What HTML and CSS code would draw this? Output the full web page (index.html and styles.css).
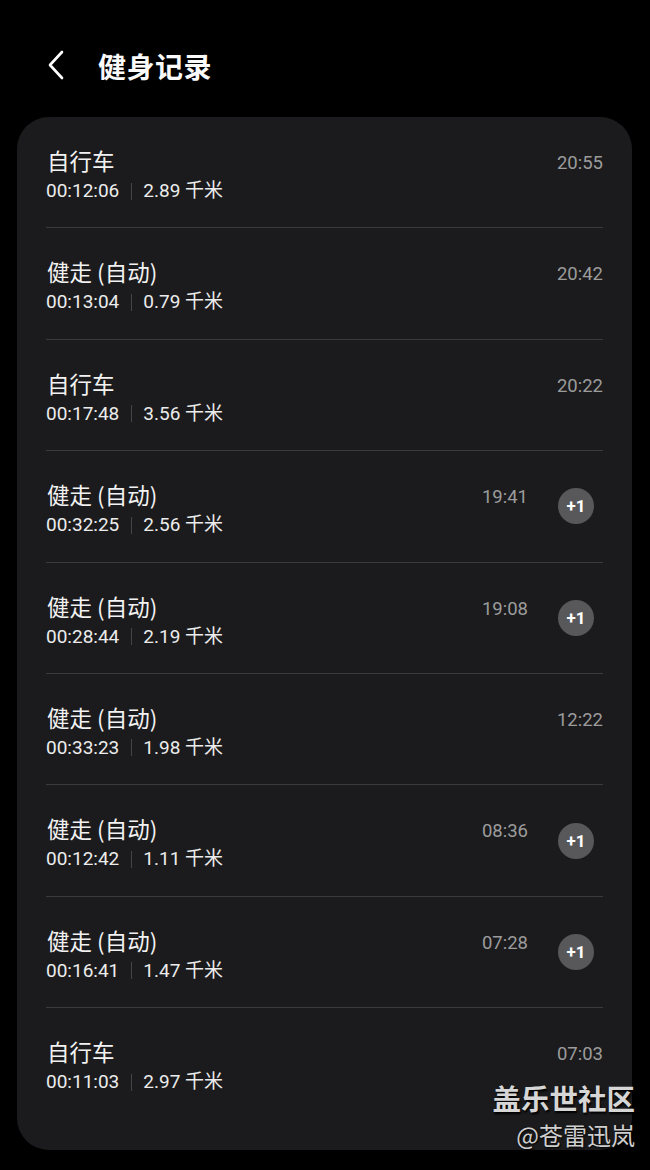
FILE: index.html
```html
<!DOCTYPE html>
<html lang="zh">
<head>
<meta charset="utf-8">
<link rel="stylesheet" href="styles.css">
</head>
<body>
<div class="screen">
  <header class="topbar">
    <svg class="back" width="20" height="32" viewBox="0 0 20 32"><path d="M16 3 L4 16 L16 29" fill="none" stroke="#fff" stroke-width="2.6" stroke-linecap="round" stroke-linejoin="round"/></svg>
    <h1 class="title">健身记录</h1>
  </header>
  <main class="card">
    <div class="row">
      <div class="info"><div class="name">自行车</div><div class="meta"><span>00:12:06</span><i class="bar"></i><span>2.89 千米</span></div></div>
      <div class="time">20:55</div>
    </div>
    <div class="row">
      <div class="info"><div class="name">健走 (自动)</div><div class="meta"><span>00:13:04</span><i class="bar"></i><span>0.79 千米</span></div></div>
      <div class="time">20:42</div>
    </div>
    <div class="row">
      <div class="info"><div class="name">自行车</div><div class="meta"><span>00:17:48</span><i class="bar"></i><span>3.56 千米</span></div></div>
      <div class="time">20:22</div>
    </div>
    <div class="row">
      <div class="info"><div class="name">健走 (自动)</div><div class="meta"><span>00:32:25</span><i class="bar"></i><span>2.56 千米</span></div></div>
      <div class="time">19:41</div><div class="badge">+1</div>
    </div>
    <div class="row">
      <div class="info"><div class="name">健走 (自动)</div><div class="meta"><span>00:28:44</span><i class="bar"></i><span>2.19 千米</span></div></div>
      <div class="time">19:08</div><div class="badge">+1</div>
    </div>
    <div class="row">
      <div class="info"><div class="name">健走 (自动)</div><div class="meta"><span>00:33:23</span><i class="bar"></i><span>1.98 千米</span></div></div>
      <div class="time">12:22</div>
    </div>
    <div class="row">
      <div class="info"><div class="name">健走 (自动)</div><div class="meta"><span>00:12:42</span><i class="bar"></i><span>1.11 千米</span></div></div>
      <div class="time">08:36</div><div class="badge">+1</div>
    </div>
    <div class="row">
      <div class="info"><div class="name">健走 (自动)</div><div class="meta"><span>00:16:41</span><i class="bar"></i><span>1.47 千米</span></div></div>
      <div class="time">07:28</div><div class="badge">+1</div>
    </div>
    <div class="row last">
      <div class="info"><div class="name">自行车</div><div class="meta"><span>00:11:03</span><i class="bar"></i><span>2.97 千米</span></div></div>
      <div class="time">07:03</div>
    </div>
  </main>
  <div class="watermark">
    <div class="wm1">盖乐世社区</div>
    <div class="wm2">@苍雷迅岚</div>
  </div>
</div>
</body>
</html>
```

FILE: styles.css
```css
* { box-sizing: border-box; }
html, body { margin: 0; padding: 0; background: #000; }
body {
  width: 650px;
  height: 1170px;
  overflow: hidden;
  font-family: "Roboto", "Noto Sans CJK SC", sans-serif;
  color: #f2f2f2;
}
.screen { position: relative; width: 650px; height: 1170px; }
.topbar {
  height: 117px;
  display: flex;
  align-items: center;
  padding: 14px 0 0 46px;
}
.back { display: block; margin-top: -2px; }
.title {
  margin: 0 0 0 32px;
  font-family: "Noto Sans CJK SC", sans-serif;
  font-weight: 700;
  font-size: 28px;
  letter-spacing: 0.5px;
  color: #fafafa;
  line-height: 1;
}
.card {
  margin: 0 18px 0 17px;
  height: 1033px;
  background: #1b1b1d;
  border-radius: 32px;
  padding: 0 29px 0 29px;
}
.row {
  display: flex;
  align-items: flex-start;
  height: 111.4px;
  border-bottom: 1px solid #3b3b3d;
  padding-top: 28px;
}
.row.last { border-bottom: none; }
.info { flex: 1; }
.name {
  font-family: "Noto Sans CJK SC", sans-serif;
  font-size: 22.5px;
  line-height: 30px;
  color: #f2f2f2;
  margin-left: 1px;
}
.meta {
  display: flex;
  align-items: center;
  font-size: 19px;
  line-height: 32px;
  color: #ececec;
}
.bar {
  display: block;
  width: 1px;
  height: 17px;
  background: #454547;
  margin: 0 11px 0 12px;
}
.time {
  margin-top: 6px;
  font-size: 18.5px;
  line-height: 24px;
  color: #9c9c9c;
}
.badge {
  align-self: center;
  margin-top: -28px;
  width: 36px;
  height: 36px;
  border-radius: 50%;
  background: #58585b;
  color: #fff;
  font-weight: 700;
  font-size: 17px;
  display: flex;
  align-items: center;
  justify-content: center;
  margin-left: 30px;
  margin-right: 9px;
}
.watermark {
  position: absolute;
  right: 15px;
  top: 1078px;
  text-align: right;
  font-family: "Noto Sans CJK SC", sans-serif;
}
.wm1 {
  font-size: 28.5px;
  font-weight: 700;
  color: #d6d6d6;
  line-height: 40px;
  text-shadow: 1px 2px 2px #000;
}
.wm2 {
  font-size: 24px;
  color: #cfcfcf;
  line-height: 34px;
  text-shadow: 1px 1px 2px #000;
}
```
